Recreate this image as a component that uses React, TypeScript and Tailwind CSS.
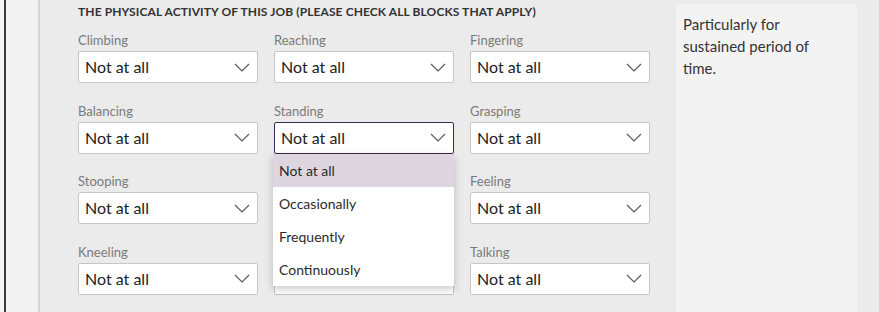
import React from "react";

const rows = [
  ["Climbing", "Reaching", "Fingering"],
  ["Balancing", "Standing", "Grasping"],
  ["Stooping", "", "Feeling"],
  ["Kneeling", "", "Talking"],
];

const options = ["Not at all", "Occasionally", "Frequently", "Continuously"];

const Chevron = () => (
  <svg width="16" height="9" viewBox="0 0 16 9" fill="none" className="shrink-0">
    <path d="M1 1l7 7 7-7" stroke="#555" strokeWidth="1.1" />
  </svg>
);

const Select = ({ active = false, hidden = false }: { active?: boolean; hidden?: boolean }) => (
  <div
    className={
      active
        ? "flex h-[32px] items-center justify-between rounded-[2px] border border-[#3d2c50] bg-white pl-[6px] pr-[7px]"
        : "flex h-[32px] items-center justify-between rounded-[2px] border border-[#c6c6c6] bg-white pl-[6px] pr-[7px]"
    }
  >
    {!hidden && <span className="text-[16px] text-[#222]">Not at all</span>}
    {!hidden && <Chevron />}
  </div>
);

const Field = ({ label, active }: { label: string; active?: boolean }) => (
  <div className="flex flex-col">
    <div className="h-[18px] text-[13px] leading-[18px] text-[#7a7a7a]">{label}</div>
    <div className="relative mt-[2px]">
      <Select active={active} hidden={label === ""} />
      {active && (
        <div className="absolute left-[-1px] top-[32px] z-10 w-[181px] bg-white shadow-[0_3px_8px_rgba(0,0,0,0.22)]">
          {options.map((o, i) => (
            <div
              key={o}
              className={
                i === 0
                  ? "flex h-[33px] items-center bg-[#ddd6e0] pl-[6px] text-[14px] text-[#2b2b2b]"
                  : "flex h-[33px] items-center pl-[6px] text-[14px] text-[#2b2b2b]"
              }
            >
              {o}
            </div>
          ))}
        </div>
      )}
    </div>
  </div>
);

export default function App() {
  return (
    <div
      className="flex h-[312px] w-[879px] overflow-hidden bg-[#ebebeb]"
      style={{ fontFamily: '"Segoe UI", Lato, "Liberation Sans", sans-serif' }}
    >
      <div className="w-[4px] bg-[#f3f3f3]" />
      <div className="w-[2px] bg-[#3a3a3a]" />
      <div className="w-[32px] bg-[#f3f3f3]" />
      <div className="w-[2px] bg-[#d6d6d6]" />
      <div className="w-[636px] pl-[38px] pt-[4px]">
        <div className="text-[12px] font-bold leading-[16px] tracking-[0.1px] text-[#333]">
          THE PHYSICAL ACTIVITY OF THIS JOB (PLEASE CHECK ALL BLOCKS THAT APPLY)
        </div>
        <div className="mt-[11px] grid w-[572px] grid-cols-3 gap-x-[16px] gap-y-[18.5px]">
          {rows.map((r, ri) =>
            r.map((label, ci) => (
              <Field key={`${ri}-${ci}`} label={label} active={label === "Standing"} />
            ))
          )}
        </div>
      </div>
      <div className="mt-[4px] w-[181px] rounded-[3px] bg-[#f3f3f3] pl-[7px] pr-[34px] pt-[9px] text-[15px] leading-[22px] text-[#333]">
        Particularly for sustained period of time.
      </div>
    </div>
  );
}
